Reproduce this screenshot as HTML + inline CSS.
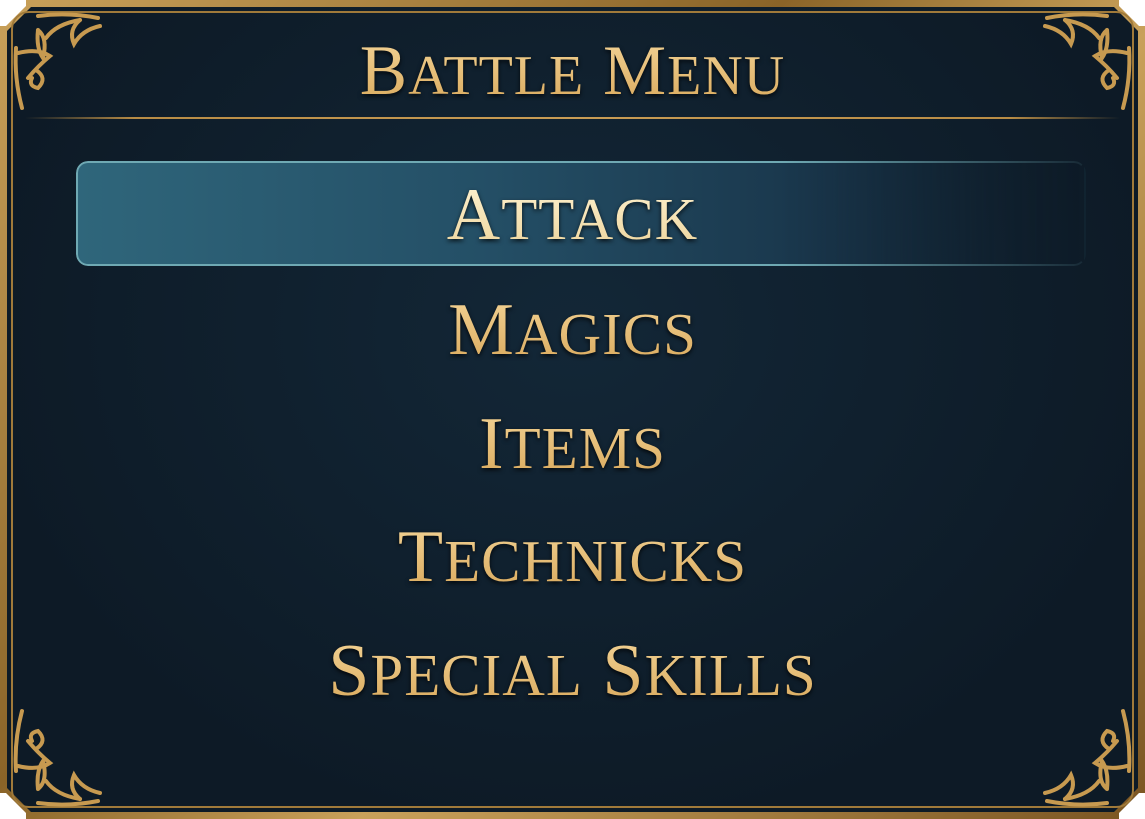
<!DOCTYPE html>
<html><head><meta charset="utf-8"><style>
html,body{margin:0;padding:0;background:#fff;}
body{width:1145px;height:819px;position:relative;overflow:hidden;font-family:"Liberation Serif",serif;}
.gold{position:absolute;left:0;top:0;width:1145px;height:819px;background:linear-gradient(135deg,#c9a15a,#8a6428 40%,#c9a15a 60%,#7a5522);
clip-path:polygon(26px 0,1119px 0,1119px 6px,1139px 26px,1145px 26px,1145px 793px,1139px 793px,1119px 813px,1119px 819px,26px 819px,26px 813px,6px 793px,0 793px,0 26px,6px 26px,26px 6px);}
.dark{position:absolute;left:7px;top:7px;width:1131px;height:805px;background:radial-gradient(ellipse at 50% 40%,#132737,#0d1a26 75%);
clip-path:polygon(24px 0,1107px 0,1131px 24px,1131px 781px,1107px 805px,24px 805px,0 781px,0 24px);}
.inner{position:absolute;left:11px;top:11px;width:1123px;height:797px;border:2px solid #a07a3a;box-sizing:border-box;border-radius:18px;}
.sep{position:absolute;left:25px;top:117px;width:1095px;height:2px;background:linear-gradient(90deg,rgba(180,140,70,0),#b88c45 10%,#c99d55 50%,#b88c45 90%,rgba(180,140,70,0));}
.hl{position:absolute;left:76px;top:161px;width:1010px;height:105px;box-sizing:border-box;border-radius:12px;border:2px solid #6fa9b3;border-right-color:transparent;
background:linear-gradient(90deg,#2f667b,#244f66 40%,#19354a 75%,rgba(20,40,55,0));box-shadow:0 0 10px rgba(90,170,190,.35);
-webkit-mask-image:linear-gradient(90deg,#000 70%,rgba(0,0,0,0.1));}
.t{position:absolute;left:0;width:1145px;text-align:center;color:#e2b96f;line-height:1;white-space:nowrap;letter-spacing:1px;
background:linear-gradient(180deg,#f3d497,#d9a95c);-webkit-background-clip:text;background-clip:text;-webkit-text-fill-color:transparent;filter:drop-shadow(0 2px 2px rgba(0,0,0,.8));}
.t.m{font-size:74px;} .t.m small{font-size:59px;}
.t.h{font-size:71px;} .t.h small{font-size:56px;}
.sel{background:linear-gradient(180deg,#fff3d2,#ecd49c);-webkit-background-clip:text;background-clip:text;}
svg.c{position:absolute;width:110px;height:110px;}
</style></head><body>
<div class="gold"></div>
<div class="dark"></div>
<div class="inner"></div>
<svg class="c" style="left:8px;top:8px" viewBox="0 0 110 110"><g fill="none" stroke="#c79a50" stroke-width="4" stroke-linecap="round">
<path d="M30 8 Q60 4 90 10"/><path d="M30 22 Q40 30 35 50 Q28 40 30 22"/><path d="M72 12 Q60 22 66 36 Q74 22 92 18"/><path d="M10 45 Q30 40 42 48 Q30 58 20 70"/><path d="M8 40 Q6 70 14 100"/><path d="M38 30 Q48 16 72 12"/><path d="M28 62 Q40 70 30 80 Q20 78 24 70"/></g></svg>
<svg class="c" style="right:8px;top:8px;transform:scaleX(-1)" viewBox="0 0 110 110"><g fill="none" stroke="#c79a50" stroke-width="4" stroke-linecap="round">
<path d="M30 8 Q60 4 90 10"/><path d="M30 22 Q40 30 35 50 Q28 40 30 22"/><path d="M72 12 Q60 22 66 36 Q74 22 92 18"/><path d="M10 45 Q30 40 42 48 Q30 58 20 70"/><path d="M8 40 Q6 70 14 100"/><path d="M38 30 Q48 16 72 12"/><path d="M28 62 Q40 70 30 80 Q20 78 24 70"/></g></svg>
<svg class="c" style="left:8px;bottom:8px;transform:scaleY(-1)" viewBox="0 0 110 110"><g fill="none" stroke="#c79a50" stroke-width="4" stroke-linecap="round">
<path d="M30 8 Q60 4 90 10"/><path d="M30 22 Q40 30 35 50 Q28 40 30 22"/><path d="M72 12 Q60 22 66 36 Q74 22 92 18"/><path d="M10 45 Q30 40 42 48 Q30 58 20 70"/><path d="M8 40 Q6 70 14 100"/><path d="M38 30 Q48 16 72 12"/><path d="M28 62 Q40 70 30 80 Q20 78 24 70"/></g></svg>
<svg class="c" style="right:8px;bottom:8px;transform:scale(-1,-1)" viewBox="0 0 110 110"><g fill="none" stroke="#c79a50" stroke-width="4" stroke-linecap="round">
<path d="M30 8 Q60 4 90 10"/><path d="M30 22 Q40 30 35 50 Q28 40 30 22"/><path d="M72 12 Q60 22 66 36 Q74 22 92 18"/><path d="M10 45 Q30 40 42 48 Q30 58 20 70"/><path d="M8 40 Q6 70 14 100"/><path d="M38 30 Q48 16 72 12"/><path d="M28 62 Q40 70 30 80 Q20 78 24 70"/></g></svg>
<div class="sep"></div>
<div class="hl"></div>
<div class="t h" style="top:36px">B<small>ATTLE</small> M<small>ENU</small></div>
<div class="t m sel" style="top:178px">A<small>TTACK</small></div>
<div class="t m" style="top:293px">M<small>AGICS</small></div>
<div class="t m" style="top:407px">I<small>TEMS</small></div>
<div class="t m" style="top:520px">T<small>ECHNICKS</small></div>
<div class="t m" style="top:634px">S<small>PECIAL</small> S<small>KILLS</small></div>
</body></html>
